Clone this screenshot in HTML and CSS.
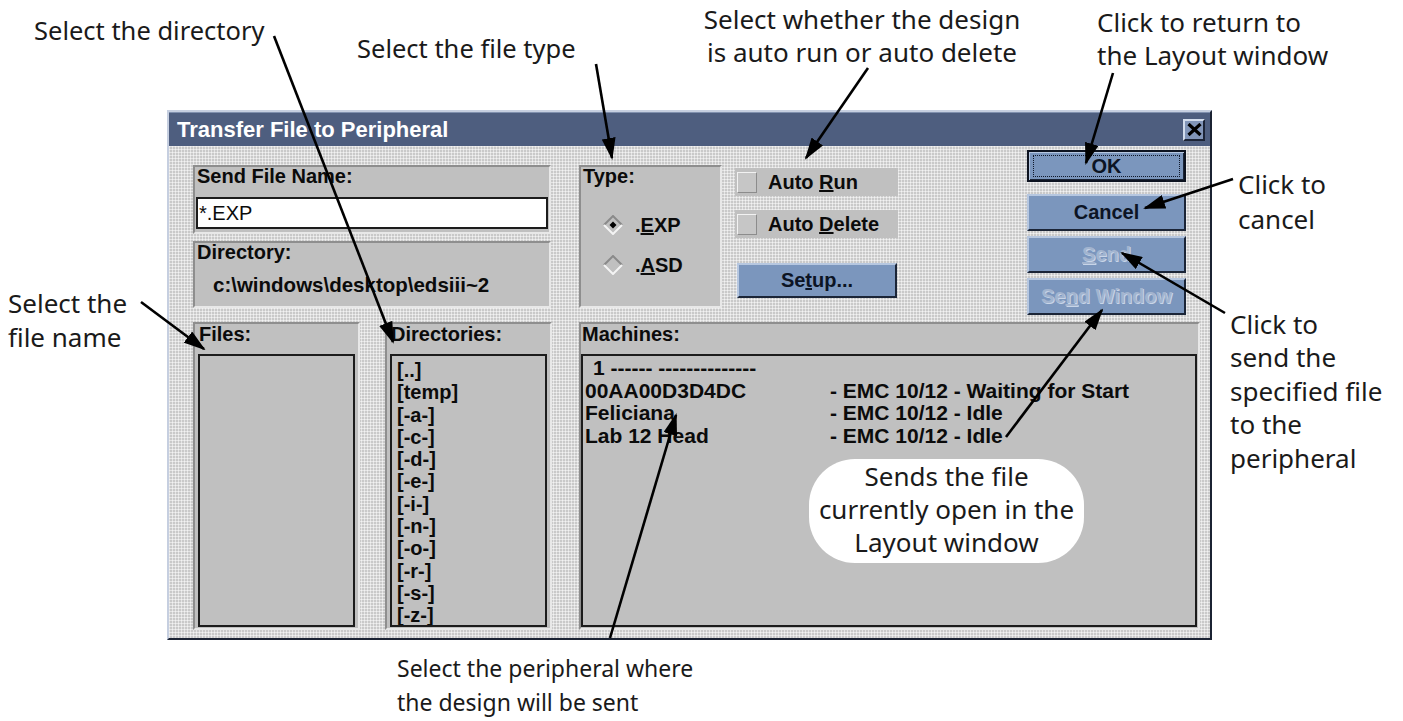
FILE: index.html
```html
<!DOCTYPE html>
<html lang="en">
<head>
<meta charset="utf-8">
<title>Transfer File to Peripheral</title>
<link rel="stylesheet" href="styles.css">
</head>
<body>
<div class="stage">
  <div class="dialog">
    <div class="titlebar">
      <span>Transfer File to Peripheral</span>
      <span class="close"><svg width="15" height="13" viewBox="0 0 15 13"><path d="M1.5 1L13.5 12M13.5 1L1.5 12" stroke="#000" stroke-width="3.2"/></svg></span>
    </div>
    <div class="body">
      <div class="top">
        <div class="leftcol">
          <div class="group g-name">
            <div class="lbl">Send File Name:</div>
            <div class="input">*.EXP</div>
          </div>
          <div class="group g-dir">
            <div class="lbl">Directory:</div>
            <div class="path">c:\windows\desktop\edsiii~2</div>
          </div>
        </div>
        <div class="group g-type">
          <div class="lbl">Type:</div>
          <div class="radios">
            <div class="radio on"><svg width="20" height="20" viewBox="0 0 20 20"><path d="M1 10L10 1L19 10" fill="none" stroke="#8a8a8a" stroke-width="2"/><path d="M1 10L10 19L19 10" fill="none" stroke="#f4f4f4" stroke-width="2"/><path d="M10 6.5L13.5 10L10 13.5L6.5 10Z" fill="#000"/></svg><span>.<u>E</u>XP</span></div>
            <div class="radio"><svg width="20" height="20" viewBox="0 0 20 20"><path d="M1 10L10 1L19 10" fill="none" stroke="#8a8a8a" stroke-width="2"/><path d="M1 10L10 19L19 10" fill="none" stroke="#f4f4f4" stroke-width="2"/></svg><span>.<u>A</u>SD</span></div>
          </div>
        </div>
        <div class="checks">
          <div class="check"><span class="box"></span><span>Auto <u>R</u>un</span></div>
          <div class="check"><span class="box"></span><span>Auto <u>D</u>elete</span></div>
          <div class="btn setup"><span>Se<u>t</u>up...</span></div>
        </div>
        <div class="buttons">
          <div class="btn ok"><span class="focus">OK</span></div>
          <div class="btn cancel">Cancel</div>
          <div class="btn off"><span><u>S</u>end</span></div>
          <div class="btn off"><span>Se<u>n</u>d Window</span></div>
        </div>
      </div>
      <div class="bottom">
        <div class="group g-files">
          <div class="lbl">Files:</div>
          <div class="list"></div>
        </div>
        <div class="group g-dirs">
          <div class="lbl">Directories:</div>
          <div class="list dirs">
            <div>[..]</div><div>[temp]</div><div>[-a-]</div><div>[-c-]</div>
            <div>[-d-]</div><div>[-e-]</div><div>[-i-]</div><div>[-n-]</div>
            <div>[-o-]</div><div>[-r-]</div><div>[-s-]</div><div>[-z-]</div>
          </div>
        </div>
        <div class="group g-mach">
          <div class="lbl">Machines:</div>
          <div class="list mach">
            <div class="row head">1 ------ --------------</div>
            <div class="row"><span>00AA00D3D4DC</span><span>- EMC 10/12 - Waiting for Start</span></div>
            <div class="row"><span>Feliciana</span><span>- EMC 10/12 - Idle</span></div>
            <div class="row"><span>Lab 12 Head</span><span>- EMC 10/12 - Idle</span></div>
          </div>
        </div>
      </div>
    </div>
  </div>

  <div class="note n-dir">Select the directory</div>
  <div class="note n-type">Select the file type</div>
  <div class="note n-auto">Select whether the design<br>is auto run or auto delete</div>
  <div class="note n-ok">Click to return to<br>the Layout window</div>
  <div class="note n-file">Select the<br>file name</div>
  <div class="note n-cancel">Click to<br>cancel</div>
  <div class="note n-send">Click to<br>send the<br>specified file<br>to the<br>peripheral</div>
  <div class="note n-mach">Select the peripheral where<br>the design will be sent</div>
  <div class="note bubble">Sends the file<br>currently open in the<br>Layout window</div>

  <svg class="arrows" width="1403" height="721" viewBox="0 0 1403 721">
    <defs>
      <marker id="head" viewBox="0 0 22 14" refX="20" refY="7" markerWidth="22" markerHeight="14" markerUnits="userSpaceOnUse" orient="auto">
        <path d="M0 0L22 7L0 14Z" fill="#000"/>
      </marker>
    </defs>
    <g stroke="#000" stroke-width="2.6" marker-end="url(#head)">
      <line x1="274" y1="36" x2="393" y2="342"/>
      <line x1="596" y1="64" x2="612" y2="158"/>
      <line x1="868" y1="68" x2="806" y2="158"/>
      <line x1="1113" y1="73" x2="1086" y2="163"/>
      <line x1="1233" y1="179" x2="1145" y2="208"/>
      <line x1="1225" y1="313" x2="1122" y2="253"/>
      <line x1="1006" y1="437" x2="1102" y2="310"/>
      <line x1="141" y1="302" x2="204" y2="349"/>
      <line x1="610" y1="638" x2="676" y2="415"/>
    </g>
  </svg>
</div>
</body>
</html>
```

FILE: styles.css
```css
*{box-sizing:border-box}
body{margin:0;background:#fff;font-family:"Liberation Sans",Arial,sans-serif;color:#0b0b0b}
.stage{position:relative;width:1403px;height:721px;padding:110px 0 0 167px;overflow:hidden}

/* dialog frame */
.dialog{width:1045px;height:530px;border:2px solid;border-color:#c6cfe0 #1b2333 #1b2333 #c6cfe0;display:flex;flex-direction:column}
.titlebar{height:34px;background:#4e5e7f;border-top:1px solid #8090ae;display:flex;align-items:center;justify-content:space-between;padding:0 5px 0 8px;color:#fff;font-weight:bold;font-size:22px}
.close{width:22px;height:22px;background:#8195b8;border:2px solid;border-color:#d2dcec #1c2436 #1c2436 #d2dcec;display:flex;align-items:center;justify-content:center}
.body{flex:1;padding:4px 10px 8px 24px;display:flex;flex-direction:column;gap:8px;background-color:#c9c9c9;background-image:linear-gradient(90deg,rgba(255,255,255,.5) 1px,transparent 1px),linear-gradient(rgba(255,255,255,.5) 1px,transparent 1px);background-size:3px 3px}
.top{height:164px;display:flex;align-items:flex-start}
.bottom{height:308px;display:flex}

/* group boxes */
.group{background:#c0c0c0;border:2px solid;border-color:#8e8e8e #e8e8e8 #e8e8e8 #8e8e8e;padding:0 1px}
.lbl{font-size:20px;font-weight:bold;line-height:18px;padding-left:1px;white-space:nowrap}
.leftcol{width:358px;margin-top:15px;display:flex;flex-direction:column;gap:7px}
.g-name{height:69px}
.g-name .lbl{margin-bottom:12px}
.input{height:32px;background:#fff;border:2px solid #1c1c1c;font-size:20px;line-height:28px;padding-left:1px}
.g-dir{height:67px}
.path{font-size:20.5px;font-weight:bold;line-height:24px;margin-top:12px;padding-left:17px;white-space:nowrap}

.g-type{width:143px;height:143px;margin:15px 0 0 28px}
.radios{margin-top:29px;padding-left:21px;display:flex;flex-direction:column;gap:18px}
.radio{height:22px;display:flex;align-items:center;gap:12px;font-size:20px;font-weight:bold}

.checks{width:163px;margin:18px 0 0 13px;display:flex;flex-direction:column}
.check{height:28px;background:#c0c0c0;display:flex;align-items:center;gap:11px;padding-left:2px;font-size:20px;font-weight:bold}
.check+.check{margin-top:14px}
.box{width:20px;height:21px;background:#c6c6c6;border:1px solid;border-color:#f2f2f2 #8c8c8c #8c8c8c #f2f2f2}

/* push buttons */
.btn{height:37px;background:#7b96bd;border:2px solid;border-color:#b6c7e0 #1b2537 #1b2537 #b6c7e0;display:flex;align-items:center;justify-content:center;font-size:20px;font-weight:bold;color:#0c1424;white-space:nowrap}
.btn.off{color:#a2b4cf;text-shadow:1px 1px 0 #c8d5e8}
.setup{height:35px;margin:25px 0 0 2px;width:160px}
.buttons{width:159px;margin-left:129px;display:flex;flex-direction:column;gap:5px}
.ok{height:32px;border:2px solid #0d1320;box-shadow:inset 1px 1px 0 #b6c7e0,inset -1px -1px 0 #1b2537}
.ok .focus{display:flex;align-items:center;justify-content:center;width:147px;height:22px;border:1px dotted #10182a}
.cancel{margin-top:7px}

/* list boxes */
.g-files,.g-dirs{width:167px;padding:0 3px 1px}
.g-dirs{margin-left:25px}
.g-mach{width:621px;margin-left:27px;padding:0 1px 1px 0}
.bottom .lbl{line-height:20px;margin-bottom:10px}
.list{height:273px;background:#c0c0c0;border:2px solid #1c1c1c;overflow:hidden}
.dirs{padding:3px 0 0 5px;font-size:20px;font-weight:bold;line-height:22.3px}
.mach{padding:1px 0 0 2px;font-size:21px;font-weight:bold;line-height:22.5px}
.row{display:flex;white-space:nowrap}
.row span:first-child{width:245px}
.row.head{padding-left:8px}

/* callouts */
.note{position:absolute;font-family:"Noto Sans","Open Sans",sans-serif;font-size:25.5px;line-height:34px;color:#1a1a1a;white-space:nowrap}
.n-dir{left:34px;top:13px}
.n-type{left:357px;top:31px}
.n-auto{left:702px;top:3px;width:320px;text-align:center;font-size:26px;line-height:33.3px}
.n-ok{left:1097px;top:6px;font-size:26px;line-height:33.3px}
.n-file{left:8px;top:286px;font-size:26px}
.n-cancel{left:1238px;top:167px;font-size:26px;line-height:35px}
.n-send{left:1230px;top:308px;font-size:26px;line-height:33.4px}
.n-mach{left:397px;top:651px;font-size:23px}
.bubble{left:809px;top:459px;width:275px;height:104px;border-radius:46px;background:#fff;text-align:center;font-size:26px;line-height:33px;padding-top:1px}
.arrows{position:absolute;left:0;top:0;pointer-events:none}
```
